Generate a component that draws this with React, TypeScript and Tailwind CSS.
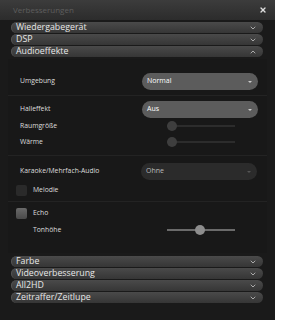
import { ChevronDown, ChevronUp, X } from "lucide-react"

const font = { fontFamily: '"Open Sans", "DejaVu Sans", sans-serif' }

function Header({ label, open }: { label: string; open?: boolean }) {
    return (
        <div className="h-[11px] rounded-full bg-gradient-to-b from-[#4a4a4a] to-[#363636] border-l border-[#555] flex items-center justify-between pl-[4px] pr-[6px] overflow-hidden">
            <span className="text-[8.8px] leading-none text-[#e8e8e8] font-medium">{label}</span>
            {open ? (
                <ChevronUp className="w-[8px] h-[8px] text-[#aaa]" strokeWidth={3} />
            ) : (
                <ChevronDown className="w-[8px] h-[8px] text-[#aaa]" strokeWidth={3} />
            )}
        </div>
    )
}

function Select({ value, dim }: { value: string; dim?: boolean }) {
    return (
        <div className={`w-[116px] h-[17px] rounded-full flex items-center justify-between pl-[5px] pr-[6px] ${dim ? "bg-[#2b2b2b]" : "bg-[#5c5c5c]"}`}>
            <span className={`text-[7px] ${dim ? "text-[#bbb]" : "text-white"}`}>{value}</span>
            <span className={`w-0 h-0 border-x-[2px] border-x-transparent border-t-[2px] ${dim ? "border-t-[#555]" : "border-t-[#ccc]"}`} />
        </div>
    )
}

function Slider({ active }: { active?: boolean }) {
    return (
        <div className="w-[68px] h-[10px] flex items-center">
            <div className={`relative w-full h-[2px] ${active ? "bg-[#6a6a6a]" : "bg-[#2c2c2c]"}`}>
                <div
                    className={`absolute top-[-4px] w-[10px] h-[10px] rounded-full ${active ? "left-[28px] bg-[#8d8d8d]" : "left-0 bg-[#3e3e3e]"}`}
                />
            </div>
        </div>
    )
}

function Check({ light }: { light?: boolean }) {
    return (
        <div className={`w-[11px] h-[11px] rounded-[2px] ${light ? "bg-gradient-to-b from-[#6a6a6a] to-[#4a4a4a]" : "bg-[#2a2a2a]"}`} />
    )
}

export default function App() {
    return (
        <div className="w-[275px] h-[320px] bg-[#1a1a1a] flex flex-col" style={font}>
            <div className="h-[20px] shrink-0 bg-gradient-to-b from-[#3c3c3c] to-[#2c2c2c] flex items-center justify-between pl-[13px] pr-[8px]">
                <span className="text-[8px] text-[#5e5e5e]">Verbesserungen</span>
                <X className="w-[8px] h-[8px] text-[#ddd]" strokeWidth={4} />
            </div>
            <div className="pl-[11px] pr-[12px] pt-[2px] flex flex-col gap-[1px]">
                <Header label="Wiedergabegerät" />
                <Header label="DSP" />
                <Header label="Audioeffekte" open />
            </div>
            <div className="mx-[8px] mt-[2px] h-[194px] shrink-0 bg-[#181818] text-[6.8px] text-[#ddd]">
                <div className="pt-[14px] pb-[5px] flex items-center justify-between pl-[12px] pr-[9px] border-b border-[#232323]">
                    <span>Umgebung</span>
                    <Select value="Normal" />
                </div>
                <div className="pl-[12px] pr-[9px] pt-[5px] pb-[8px] border-b border-[#232323]">
                    <div className="flex items-center justify-between">
                        <span>Halleffekt</span>
                        <Select value="Aus" />
                    </div>
                    <div className="flex items-center mt-[3px] h-[10px]">
                        <span className="w-[147px] shrink-0">Raumgröße</span>
                        <Slider />
                    </div>
                    <div className="flex items-center mt-[6px] h-[10px]">
                        <span className="w-[147px] shrink-0">Wärme</span>
                        <Slider />
                    </div>
                </div>
                <div className="pl-[8px] pr-[10px] pt-[7px] pb-[5px] border-b border-[#232323]">
                    <div className="flex items-center justify-between pl-[4px]">
                        <span>Karaoke/Mehrfach-Audio</span>
                        <Select value="Ohne" dim />
                    </div>
                    <div className="flex items-center gap-[6px] mt-[5px]">
                        <Check />
                        <span>Melodie</span>
                    </div>
                </div>
                <div className="pl-[8px] pr-[10px] pt-[6px]">
                    <div className="flex items-center gap-[6px]">
                        <Check light />
                        <span>Echo</span>
                    </div>
                    <div className="flex items-center mt-[6px] h-[10px] pl-[17px]">
                        <span className="w-[134px] shrink-0">Tonhöhe</span>
                        <Slider active />
                    </div>
                </div>
            </div>
            <div className="pl-[11px] pr-[12px] pt-[3px] flex flex-col gap-[1px]">
                <Header label="Farbe" />
                <Header label="Videoverbesserung" />
                <Header label="All2HD" />
                <Header label="Zeitraffer/Zeitlupe" />
            </div>
        </div>
    )
}
